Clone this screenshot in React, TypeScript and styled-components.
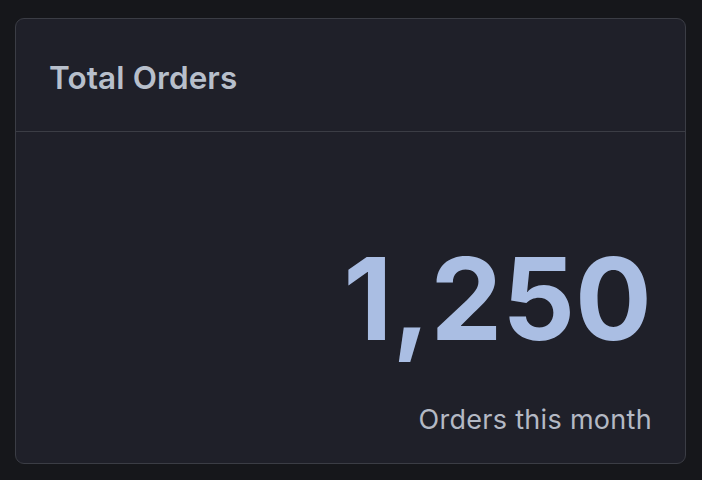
import React from 'react';
import styled, { createGlobalStyle } from 'styled-components';

const GlobalStyle = createGlobalStyle`
  html, body {
    margin: 0;
    padding: 0;
    background: #16171b;
  }
  body {
    font-family: Inter, 'Noto Sans', sans-serif;
  }
`;

const Page = styled.div`
  width: 702px;
  height: 480px;
  padding: 18px 16px 16px 15px;
  box-sizing: border-box;
`;

const Card = styled.section`
  height: 100%;
  box-sizing: border-box;
  display: flex;
  flex-direction: column;
  background: #1f2029;
  border: 1.5px solid #3b3d45;
  border-radius: 9px;
`;

const Header = styled.header`
  height: 113px;
  display: flex;
  align-items: center;
  padding: 4px 33px 0;
  border-bottom: 1.5px solid #3b3d45;
  box-sizing: border-box;
`;

const Title = styled.h2`
  margin: 0;
  font-size: 31.5px;
  font-weight: 600;
  color: #b7bfcb;
  letter-spacing: 0.1px;
`;

const Body = styled.div`
  flex: 1;
  display: flex;
  flex-direction: column;
  align-items: flex-end;
  justify-content: flex-end;
  padding: 0 33px 27px;
`;

const Value = styled.div`
  font-size: 114px;
  font-weight: 700;
  line-height: 1;
  color: #aabee3;
  letter-spacing: 0;
`;

const Caption = styled.div`
  margin-top: 47px;
  font-size: 27px;
  font-weight: 400;
  color: #b4b9c4;
  letter-spacing: 0.3px;
`;

export default function App() {
  return (
    <>
      <GlobalStyle />
      <Page>
        <Card>
          <Header>
            <Title>Total Orders</Title>
          </Header>
          <Body>
            <Value>1,250</Value>
            <Caption>Orders this month</Caption>
          </Body>
        </Card>
      </Page>
    </>
  );
}
